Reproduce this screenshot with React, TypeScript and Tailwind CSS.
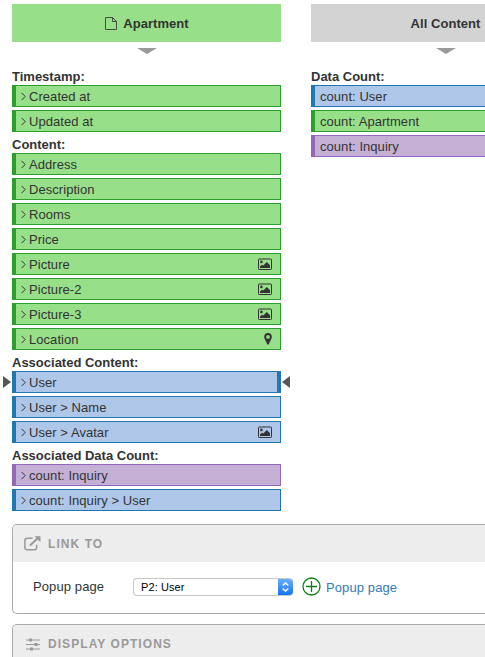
import type { ReactNode } from 'react';

type Tone = 'green' | 'blue' | 'purple';

const tones: Record<Tone, string> = {
  green: 'border-[#2ca02c] bg-[#98df8a]',
  blue: 'border-[#1f77b4] bg-[#aec7e8]',
  purple: 'border-[#9467bd] bg-[#c5b0d5]',
};

function Chevron() {
  return (
    <svg width="5" height="9" viewBox="0 0 5 9" className="mr-[3px] shrink-0" fill="none" stroke="#333" strokeWidth="1">
      <path d="M0.5 0.8L4.2 4.5L0.5 8.2" />
    </svg>
  );
}

function PictureIcon() {
  return (
    <svg width="14" height="12" viewBox="0 0 14 12" className="mr-2">
      <rect x="0.5" y="1" width="13" height="10.5" rx="0.7" fill="none" stroke="#333" />
      <circle cx="3.4" cy="3.9" r="1.3" fill="#333" />
      <path d="M2 10V8.4L4 6.7L5.3 7.5L8.8 4L12 7.2V10Z" fill="#333" />
    </svg>
  );
}

function PinIcon() {
  return (
    <svg width="8" height="12" viewBox="0 0 8 12" className="mr-2">
      <path fillRule="evenodd" fill="#333" d="M4 0A3.8 3.8 0 0 0 .2 3.8C.2 5.5 1.2 6.8 3.2 11.3Q4 12.2 4.8 11.3C6.8 6.8 7.8 5.5 7.8 3.8A3.8 3.8 0 0 0 4 0ZM4 2A1.9 1.9 0 1 1 4 5.8A1.9 1.9 0 0 1 4 2Z" />
    </svg>
  );
}

function Row({ tone, label, chevron = true, icon, selected }: { tone: Tone; label: string; chevron?: boolean; icon?: ReactNode; selected?: boolean }) {
  return (
    <div className={`relative mb-[3px] flex h-[22px] items-center border border-l-4 pl-[5px] ${tones[tone]} ${selected ? 'border-r-4' : ''}`}>
      {selected && (
        <>
          <svg width="8" height="12" className="absolute -left-[13px] top-[4px]"><path d="M0 0L8 6L0 12Z" fill="#555" /></svg>
          <svg width="8" height="12" className="absolute -right-[13px] top-[4px]"><path d="M8 0L0 6L8 12Z" fill="#555" /></svg>
        </>
      )}
      {chevron && <Chevron />}
      <span className="flex-1 whitespace-nowrap pt-[2px] tracking-[0.05px]">{label}</span>
      {icon}
    </div>
  );
}

function Heading({ children }: { children: ReactNode }) {
  return <h3 className="h-[18px] pt-px font-bold leading-[18px]">{children}</h3>;
}

function ColumnHead({ className, children }: { className: string; children: ReactNode }) {
  return (
    <>
      <div className={`flex h-[38px] items-center justify-center pt-[2px] font-bold tracking-[0.05px] ${className}`}>{children}</div>
      <svg width="20" height="6" className="mx-auto mb-[13px] mt-[6px] block"><path d="M0 0H20L10 6Z" fill="#999" /></svg>
    </>
  );
}

function PanelHead({ icon, children }: { icon: ReactNode; children: ReactNode }) {
  return (
    <div className="flex h-[37px] items-center rounded-tl-[4px] bg-[#ededed] pl-[11px] text-[12px] font-bold tracking-[1px] text-[#999]">
      <span className="w-6">{icon}</span>
      <span className="tracking-[1.06px]">{children}</span>
    </div>
  );
}

export default function App() {
  return (
    <div className="h-[657px] w-[485px] overflow-hidden bg-white pl-3 pt-1 font-['Liberation_Sans',Arial,sans-serif] text-[13px] text-[#333]">
      <div className="flex h-[520px] gap-[30px]">
        <section className="w-[269px] shrink-0">
          <ColumnHead className="bg-[#98df8a] pl-px">
            <svg width="12" height="14" viewBox="0 0 12 14" className="mr-[6px]" fill="none" stroke="#333" strokeWidth="0.85">
              <path d="M7.5 0.5H0.8Q0.5 0.5 0.5 0.8V12.2Q0.5 12.5 0.8 12.5H11.2Q11.5 12.5 11.5 12.2V4.5L7.5 0.5V4.5H11.5" />
            </svg>
            Apartment
          </ColumnHead>
          <Heading>Timestamp:</Heading>
          <Row tone="green" label="Created at" />
          <Row tone="green" label="Updated at" />
          <Heading>Content:</Heading>
          <Row tone="green" label="Address" />
          <Row tone="green" label="Description" />
          <Row tone="green" label="Rooms" />
          <Row tone="green" label="Price" />
          <Row tone="green" label="Picture" icon={<PictureIcon />} />
          <Row tone="green" label="Picture-2" icon={<PictureIcon />} />
          <Row tone="green" label="Picture-3" icon={<PictureIcon />} />
          <Row tone="green" label="Location" icon={<PinIcon />} />
          <Heading>Associated Content:</Heading>
          <Row tone="blue" label="User" selected />
          <Row tone="blue" label="User > Name" />
          <Row tone="blue" label="User > Avatar" icon={<PictureIcon />} />
          <Heading>Associated Data Count:</Heading>
          <Row tone="purple" label="count: Inquiry" />
          <Row tone="blue" label="count: Inquiry > User" />
        </section>
        <section className="w-[269px] shrink-0">
          <ColumnHead className="bg-[#d3d3d3]">All Content</ColumnHead>
          <Heading>Data Count:</Heading>
          <Row tone="blue" label="count: User" chevron={false} />
          <Row tone="green" label="count: Apartment" chevron={false} />
          <Row tone="purple" label="count: Inquiry" chevron={false} />
        </section>
      </div>

      <section className="mb-[10px] h-[90px] rounded-l-[5px] border border-r-0 border-[#aaa]">
        <PanelHead
          icon={
            <svg width="17" height="15" viewBox="0 0 17 15" fill="none" stroke="#999" strokeWidth="1.5">
              <path d="M8.5 2.2H3.2Q0.9 2.2 0.9 4.5V11.4Q0.9 13.7 3.2 13.7H10.4Q12.7 13.7 12.7 11.4V8.8" />
              <path d="M6 9.5L14 2" strokeWidth="2" />
              <path d="M10.5 0.3H16.5V6.3Z" fill="#999" stroke="none" />
            </svg>
          }
        >
          LINK TO
        </PanelHead>
        <div className="flex h-[50px] items-center pl-5">
          <span className="w-[100px] tracking-[0.1px]">Popup page</span>
          <div className="flex h-[18px] w-[160px] items-center justify-between overflow-hidden rounded-[4px] border border-r-0 border-[#c6c6c6] bg-white pl-[7px] text-[11px] text-black">
            <span className="tracking-[0.1px]">P2: User</span>
            <span className="-my-px flex h-[18px] w-[15px] items-center justify-center bg-linear-to-b from-[#6bb2fb] to-[#0a6dfb]">
              <svg width="7" height="10" viewBox="0 0 7 10" fill="none" stroke="white" strokeWidth="1.4"><path d="M0.7 3.6L3.5 0.9L6.3 3.6M0.7 6.4L3.5 9.1L6.3 6.4" /></svg>
            </span>
          </div>
          <svg width="19" height="19" viewBox="0 0 19 19" className="relative -top-px ml-[9px] mr-[5px]" fill="none" stroke="#0a7d14" strokeWidth="1.3">
            <circle cx="9.5" cy="9.5" r="8.5" />
            <path d="M4 9.5H15M9.5 4V15" />
          </svg>
          <span className="relative top-px tracking-[0.1px] text-[#337ab7]">Popup page</span>
        </div>
      </section>

      <section className="h-[90px] rounded-l-[5px] border border-r-0 border-[#aaa]">
        <PanelHead
          icon={
            <svg width="15" height="13" viewBox="0 0 15 13" className="relative left-[2px] top-px" fill="#999">
              <path d="M0 1.5H14V2.6H0ZM0 6H14V7.1H0ZM0 10.5H14V11.6H0Z" />
              <path d="M3 0.5H6V3.6H3ZM8.5 5H11.5V8.1H8.5ZM4 9.5H7V12.6H4Z" />
            </svg>
          }
        >
          DISPLAY OPTIONS
        </PanelHead>
      </section>
    </div>
  );
}
